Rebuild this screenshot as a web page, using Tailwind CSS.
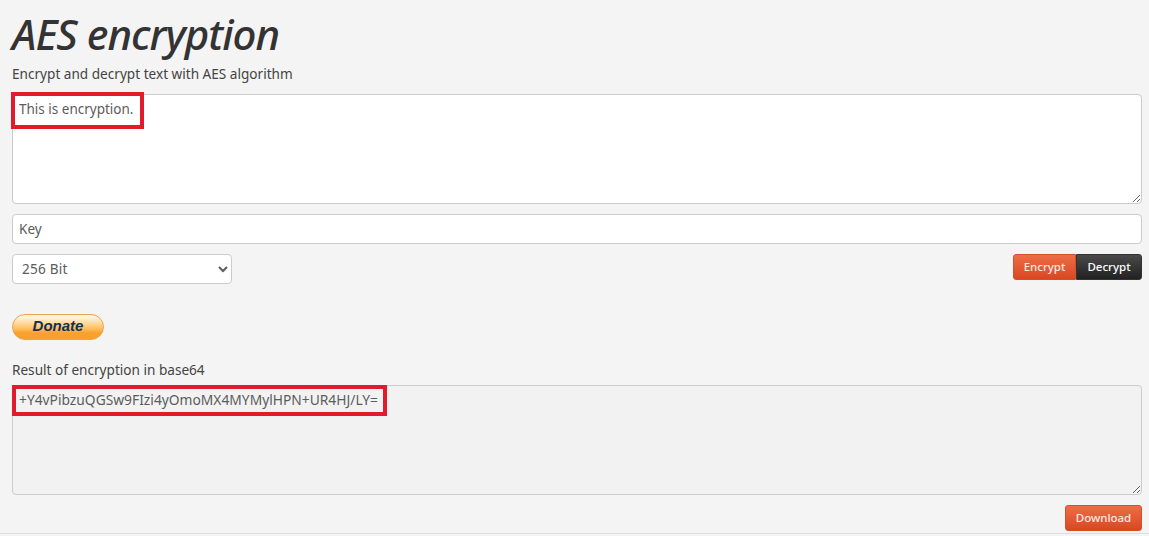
<!DOCTYPE html>
<html lang="en">
<head>
  <meta charset="UTF-8" />
  <title>AES encryption</title>
  <script src="https://cdn.jsdelivr.net/npm/@tailwindcss/browser@4"></script>
</head>
<body class="bg-[#f4f4f4] h-[536px] overflow-hidden font-['Noto_Sans',sans-serif] text-[#444]">
  <div class="h-[534px] border-b border-[#ddd] pl-3 pr-[7px]">
    <h1 class="pt-[11px] h-[64px] text-[42px] leading-[46px] italic font-medium text-[#333] tracking-[-1px]">AES encryption</h1>
    <p class="h-[30px] text-[13.6px] leading-[20px] text-[#444]">Encrypt and decrypt text with AES algorithm</p>

    <!-- input -->
    <div class="relative mt-[-2px] pt-[2px]">
      <textarea class="block w-full h-[110px] bg-white border border-[#ccc] rounded-[4px] px-[6px] py-[4px] text-[13.5px] leading-[20px] text-[#5c5c5c]">This is encryption.</textarea>
      <div class="absolute top-0 -left-px w-[133px] h-[37px] border-4 border-[#e01b2c]"></div>
    </div>

    <input value="Key" class="block mt-[10px] w-full h-[30px] bg-white border border-[#ccc] rounded-[4px] px-[6px] pb-[2px] text-[13.6px] text-[#5c5c5c]" />

    <div class="flex justify-between items-start mt-[10px] h-[60px]">
      <select class="w-[220px] h-[30px] bg-white border border-[#ccc] rounded-[4px] pl-[5px] pb-[1px] text-[13.6px] tracking-[0.2px] text-[#5c5c5c]">
        <option>256 Bit</option>
      </select>
      <div class="flex">
        <button class="w-[63px] h-[26px] rounded-l-[3px] border border-[#d4502c] bg-linear-to-b from-[#ed6d47] to-[#d9471f] text-[11.5px] font-medium text-[#fbe9e3]">Encrypt</button>
        <button class="w-[66px] h-[26px] rounded-r-[3px] border border-[#333] bg-linear-to-b from-[#4a4a4a] to-[#222] text-[11.5px] font-medium text-white">Decrypt</button>
      </div>
    </div>

    <!-- donate -->
    <button class="flex items-center justify-center w-[92px] h-[26px] pb-[2px] rounded-full border border-[#e8a356] bg-linear-to-b from-[#fff3d6] from-10% via-[#ffc163] via-55% to-[#f9a02c] to-75%">
      <span class="font-['Liberation_Sans',sans-serif] text-[15px] leading-[20px] font-bold italic text-[#12304f]">Donate</span>
    </button>

    <p class="mt-[20px] h-[25px] text-[13.6px] leading-[20px] text-[#444]">Result of encryption in base64</p>

    <!-- output -->
    <div class="relative">
      <textarea readonly class="block w-full h-[110px] bg-[#f2f2f2] border border-[#ccc] rounded-[4px] px-[6px] py-[4px] text-[13.8px] leading-[20px] text-[#5c5c5c]">+Y4vPibzuQGSw9FIzi4yOmoMX4MYMylHPN+UR4HJ/LY=</textarea>
      <div class="absolute top-0 left-0 w-[375px] h-[31px] border-4 border-[#e01b2c]"></div>
    </div>

    <div class="flex justify-end mt-[10px]">
      <button class="w-[77px] h-[26px] rounded-[3px] border border-[#d4502c] bg-linear-to-b from-[#ed6d47] to-[#d9471f] text-[11.5px] font-medium text-[#fbe9e3]">Download</button>
    </div>
  </div>
</body>
</html>
